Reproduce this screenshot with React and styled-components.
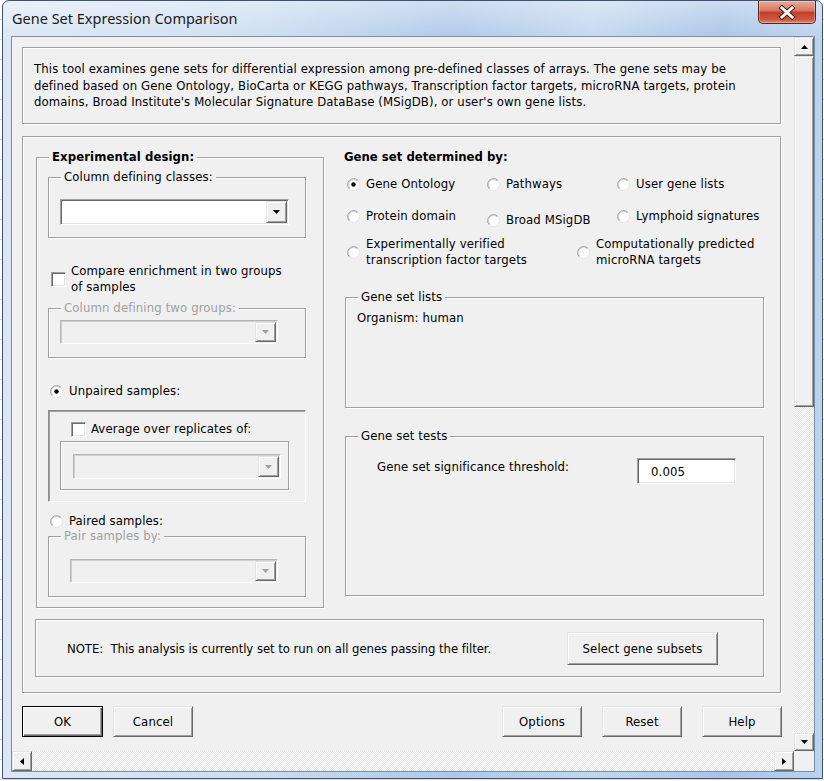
import React from 'react';
import styled, { createGlobalStyle, css } from 'styled-components';

const uiFont = `"DejaVu Sans Condensed", "DejaVu Sans", Tahoma, sans-serif`;

const GlobalStyle = createGlobalStyle`
  html, body {
    margin: 0;
    padding: 0;
  }
  body {
    font-family: ${uiFont};
    font-size: 13px;
    letter-spacing: 0.12px;
    color: #000;
    background: #fff;
  }
  * {
    box-sizing: border-box;
  }
`;

// classic win32 edges
const etched = css`
  border: 1px solid #a0a0a0;
  box-shadow: inset 1px 1px 0 #fff, 1px 1px 0 #fff;
`;

const sunken = css`
  border: 1px solid;
  border-color: #a0a0a0 #fff #fff #a0a0a0;
  box-shadow: inset 1px 1px 0 #696969, inset -1px -1px 0 #e3e3e3;
`;

const raised = css`
  border: 1px solid;
  border-color: #e3e3e3 #696969 #696969 #e3e3e3;
  box-shadow: inset 1px 1px 0 #fff, inset -1px -1px 0 #a0a0a0;
  background: #f0f0f0;
`;

const Screen = styled.div`
  width: 824px;
  height: 781px;
  overflow: hidden;
  padding-left: 2px;
  background: repeating-linear-gradient(to bottom, #ffffff 0 19px, #d5dbe4 19px 20px);
`;

const Window = styled.div`
  width: 821px;
  height: 779px;
  display: flex;
  flex-direction: column;
  border: 1px solid #3f5270;
  border-radius: 7px 7px 0 0;
  background:
    linear-gradient(to bottom, rgba(255, 255, 255, 0.4), rgba(255, 255, 255, 0) 40px),
    linear-gradient(to right, #dce7f4 0%, #cddef1 30%, #aec8e9 55%, #c2d7ef 72%, #a9c4e7 88%, #bcd2ee 100%);
`;

const TitleBar = styled.div`
  height: 35px;
  flex: none;
  display: flex;
  align-items: flex-start;
  padding-left: 9px;
`;

const Title = styled.div`
  font-family: "Noto Sans", "Open Sans", sans-serif;
  font-size: 14.5px;
  letter-spacing: 0;
  line-height: 20px;
  margin-top: 7px;
  color: #1b1b1b;
`;

const CloseButton = styled.div`
  margin-left: auto;
  margin-right: 6px;
  width: 58px;
  height: 23px;
  border: 1px solid #5a2219;
  border-top: none;
  border-radius: 0 0 5px 5px;
  background: linear-gradient(to bottom, #e8ac9f 0%, #d87a66 42%, #c2402a 52%, #cd5a40 85%, #e08a6c 100%);
  box-shadow: inset 0 0 0 1px rgba(255, 255, 255, 0.3);
  display: flex;
  align-items: center;
  justify-content: center;
`;

const Client = styled.div`
  flex: 1;
  min-height: 0;
  margin: 0 7px 6px 8px;
  border: 1px solid #7b8ca5;
  display: grid;
  grid-template-columns: 1fr 20px;
  grid-template-rows: 1fr 20px;
  background: #f0f0f0;
`;

const Viewport = styled.div`
  overflow: hidden;
  min-height: 0;
  padding: 10px 0 0 10px;
`;

const DescBox = styled.div`
  width: 759px;
  height: 77px;
  ${etched};
  padding: 13px 0 0 11px;
  line-height: 16.5px;
  white-space: nowrap;
`;

const MainFrame = styled.div`
  width: 759px;
  height: 557px;
  margin-top: 12px;
  ${etched};
  padding: 20px 0 0 13px;
`;

const TopRow = styled.div`
  display: flex;
  align-items: flex-start;
`;

const Group = styled.div`
  width: ${p => p.$w}px;
  height: ${p => p.$h}px;
  margin: ${p => p.$m || '0'};
  ${etched};
`;

const SunkenBox = styled.div`
  width: ${p => p.$w}px;
  height: ${p => p.$h}px;
  margin: ${p => p.$m || '0'};
  border: 1px solid;
  border-color: #8a8a8a #fff #fff #8a8a8a;
  box-shadow: inset 1px 1px 0 #a0a0a0;
`;

const Caption = styled.div`
  width: fit-content;
  margin: -9px 0 0 12px;
  padding: 0 3px;
  line-height: 16px;
  background: #f0f0f0;
  color: ${p => (p.$disabled ? '#a0a0a0' : '#000')};
  font-weight: ${p => (p.$bold ? 700 : 400)};
  letter-spacing: ${p => (p.$bold ? '0.1px' : 'inherit')};
`;

const Heading = styled.div`
  line-height: 16px;
  font-weight: 700;
  letter-spacing: 0;
`;

const ComboBox = styled.div`
  width: ${p => p.$w}px;
  height: ${p => p.$h}px;
  margin: ${p => p.$m || '0'};
  display: flex;
  justify-content: flex-end;
  padding: 1px;
  background: ${p => (p.$disabled ? '#f0f0f0' : '#fff')};
  ${sunken};
  ${p => p.$disabled && css`
    border-color: #b4b4b4 #fff #fff #b4b4b4;
    box-shadow: inset 1px 1px 0 #d0d0d0;
  `}
`;

const DropButton = styled.div`
  width: 21px;
  ${raised};
  display: flex;
  align-items: center;
  justify-content: center;
`;

const OptionRow = styled.div`
  display: flex;
  align-items: center;
  gap: ${p => p.$gap || 6}px;
  margin: ${p => p.$m || '0'};
  width: ${p => (p.$w ? `${p.$w}px` : 'auto')};
  line-height: 16px;
  white-space: nowrap;
  color: ${p => (p.$disabled ? '#a0a0a0' : '#000')};
`;

const CheckBox = styled.span`
  width: 15px;
  height: 15px;
  flex: none;
  background: #fff;
  border: 1px solid;
  border-color: #a0a0a0 #fff #fff #a0a0a0;
  box-shadow: inset 1px 1px 0 #696969, inset -1px -1px 0 #e3e3e3;
`;

const RadioMark = styled.svg`
  flex: none;
  display: block;
`;

const RadioGrid = styled.div`
  display: grid;
  grid-template-columns: 140px 130px 1fr;
  row-gap: 16px;
  margin: 11px 0 0 3px;
`;

const TwoLineRow = styled.div`
  display: flex;
  margin: 12px 0 0 3px;
`;

const RightColumn = styled.div`
  width: 420px;
  margin: -8px 0 0 20px;
`;

const PlainText = styled.div`
  line-height: 16px;
  margin: ${p => p.$m || '0'};
`;

const FieldRow = styled.div`
  display: flex;
  align-items: flex-start;
  margin-top: 14px;
  padding-left: 31px;
`;

const FieldLabel = styled.div`
  width: 260px;
  margin-top: 1px;
  line-height: 16px;
`;

const NumberInput = styled.input`
  width: 99px;
  height: 26px;
  padding: 0 0 0 13px;
  font: inherit;
  letter-spacing: inherit;
  color: #000;
  background: #fff;
  outline: none;
  ${sunken};
`;

const NoteBox = styled.div`
  width: 729px;
  height: 58px;
  margin: 11px 0 0 -1px;
  ${etched};
  display: flex;
  align-items: center;
  padding-left: 31px;
  letter-spacing: -0.05px;
  white-space: pre;
`;

const PushButton = styled.button`
  width: ${p => p.$w || 80}px;
  height: ${p => p.$h || 31}px;
  margin: 0;
  padding: 0;
  font: inherit;
  letter-spacing: 0.12px;
  color: #000;
  ${raised};
  ${p => p.$default && css`
    border-color: #000;
    box-shadow: inset 1px 1px 0 #fff, inset -1px -1px 0 #696969, inset -2px -2px 0 #a0a0a0;
  `}
`;

const NoteButton = styled(PushButton)`
  margin-left: auto;
  margin-right: 45px;
`;

const ButtonRow = styled.div`
  width: 760px;
  margin-top: 13px;
  display: flex;
  gap: 10px;
`;

const ButtonGroup = styled.div`
  display: flex;
  gap: 20px;
  margin-left: auto;
`;

const VScroll = styled.div`
  display: flex;
  flex-direction: column;
  min-height: 0;
`;

const HScroll = styled.div`
  display: flex;
`;

const ScrollButton = styled.div`
  flex: none;
  width: ${p => p.$w || 20}px;
  height: ${p => p.$h || 20}px;
  ${raised};
  display: flex;
  align-items: center;
  justify-content: center;
`;

const Thumb = styled.div`
  flex: none;
  height: ${p => p.$h}px;
  ${raised};
`;

const Track = styled.div`
  flex: 1;
  background: repeating-conic-gradient(#ffffff 0 25%, #e6e6e6 0 50%) 0 0 / 2px 2px;
`;

const Corner = styled.div`
  background: #f0f0f0;
`;

const Arrow = ({ dir = 'down', color = '#000' }) => {
  const vertical = dir === 'up' || dir === 'down';
  const points = {
    down: '0,0 7,0 3.5,4',
    up: '0,4 7,4 3.5,0',
    left: '4,0 4,7 0,3.5',
    right: '0,0 0,7 4,3.5',
  }[dir];
  return (
    <svg width={vertical ? 7 : 4} height={vertical ? 4 : 7} viewBox={vertical ? '0 0 7 4' : '0 0 4 7'}>
      <polygon points={points} fill={color} />
    </svg>
  );
};

const Radio = ({ checked }) => (
  <RadioMark width="13" height="13" viewBox="0 0 13 13">
    <circle cx="6.5" cy="6.5" r="6" fill="#fff" stroke="#e3e3e3" />
    <path d="M2.26 10.74 A6 6 0 0 1 10.74 2.26" fill="none" stroke="#a0a0a0" />
    <path d="M2.96 10.04 A5 5 0 0 1 10.04 2.96" fill="none" stroke="#c8c8c8" />
    {checked && <circle cx="6.5" cy="6.5" r="2.2" fill="#000" />}
  </RadioMark>
);

const Combo = ({ disabled, w, h, m }) => (
  <ComboBox $disabled={disabled} $w={w} $h={h} $m={m}>
    <DropButton>
      <Arrow dir="down" color={disabled ? '#a0a0a0' : '#000'} />
    </DropButton>
  </ComboBox>
);

const RadioOption = ({ checked, children, m, w }) => (
  <OptionRow $m={m} $w={w}>
    <Radio checked={checked} />
    <span>{children}</span>
  </OptionRow>
);

const CloseIcon = () => (
  <svg width="18" height="15" viewBox="0 0 18 15">
    <path d="M4 3 L14 12 M14 3 L4 12" stroke="#4a1d15" strokeWidth="5" strokeLinecap="square" />
    <path d="M4 3 L14 12 M14 3 L4 12" stroke="#fff" strokeWidth="3" strokeLinecap="square" />
  </svg>
);

const App = () => (
  <Screen>
    <GlobalStyle />
    <Window>
      <TitleBar>
        <Title>Gene Set Expression Comparison</Title>
        <CloseButton>
          <CloseIcon />
        </CloseButton>
      </TitleBar>
      <Client>
        <Viewport>
          <DescBox>
            This tool examines gene sets for differential expression among pre-defined classes of arrays. The gene sets may be
            <br />
            defined based on Gene Ontology, BioCarta or KEGG pathways, Transcription factor targets, microRNA targets, protein
            <br />
            domains, Broad Institute's Molecular Signature DataBase (MSigDB), or user's own gene lists.
          </DescBox>

          <MainFrame>
            <TopRow>
              <Group $w={288} $h={451}>
                <Caption $bold>Experimental design:</Caption>

                <Group $w={258} $h={61} $m="12px 0 0 11px">
                  <Caption>Column defining classes:</Caption>
                  <Combo w={229} h={26} m="14px 0 0 11px" />
                </Group>

                <OptionRow $m="25px 0 0 14px" $gap={5}>
                  <CheckBox />
                  <span>
                    Compare enrichment in two groups
                    <br />
                    of samples
                  </span>
                </OptionRow>

                <Group $w={258} $h={50} $m="13px 0 0 11px">
                  <Caption $disabled>Column defining two groups:</Caption>
                  <Combo disabled w={218} h={24} m="4px 0 0 11px" />
                </Group>

                <RadioOption checked m="25px 0 0 13px">Unpaired samples:</RadioOption>

                <SunkenBox $w={258} $h={92} $m="11px 0 0 11px">
                  <OptionRow $m="10px 0 0 22px" $gap={5}>
                    <CheckBox />
                    <span>Average over replicates of:</span>
                  </OptionRow>
                  <Group $w={229} $h={49} $m="4px 0 0 11px">
                    <Combo disabled w={208} h={25} m="12px 0 0 12px" />
                  </Group>
                </SunkenBox>

                <RadioOption m="11px 0 0 13px">Paired samples:</RadioOption>

                <Group $w={258} $h={61} $m="7px 0 0 11px">
                  <Caption $disabled>Pair samples by:</Caption>
                  <Combo disabled w={208} h={24} m="15px 0 0 21px" />
                </Group>
              </Group>

              <RightColumn>
                <Heading>Gene set determined by:</Heading>
                <RadioGrid>
                  <RadioOption checked>Gene Ontology</RadioOption>
                  <RadioOption>Pathways</RadioOption>
                  <RadioOption>User gene lists</RadioOption>
                  <RadioOption>Protein domain</RadioOption>
                  <RadioOption m="4px 0 -4px 0">Broad MSigDB</RadioOption>
                  <RadioOption>Lymphoid signatures</RadioOption>
                </RadioGrid>
                <TwoLineRow>
                  <RadioOption w={230}>
                    Experimentally verified
                    <br />
                    transcription factor targets
                  </RadioOption>
                  <RadioOption>
                    Computationally predicted
                    <br />
                    microRNA targets
                  </RadioOption>
                </TwoLineRow>

                <Group $w={419} $h={111} $m="29px 0 0 1px">
                  <Caption>Gene set lists</Caption>
                  <PlainText $m="5px 0 0 11px">Organism: human</PlainText>
                </Group>

                <Group $w={419} $h={160} $m="28px 0 0 1px">
                  <Caption>Gene set tests</Caption>
                  <FieldRow>
                    <FieldLabel>Gene set significance threshold:</FieldLabel>
                    <NumberInput defaultValue="0.005" />
                  </FieldRow>
                </Group>
              </RightColumn>
            </TopRow>

            <NoteBox>
              <span>NOTE:  This analysis is currently set to run on all genes passing the filter.</span>
              <NoteButton $w={151} $h={33}>Select gene subsets</NoteButton>
            </NoteBox>
          </MainFrame>

          <ButtonRow>
            <PushButton $default $w={81}>OK</PushButton>
            <PushButton>Cancel</PushButton>
            <ButtonGroup>
              <PushButton>Options</PushButton>
              <PushButton>Reset</PushButton>
              <PushButton>Help</PushButton>
            </ButtonGroup>
          </ButtonRow>
        </Viewport>

        <VScroll>
          <ScrollButton $h={19}>
            <Arrow dir="up" />
          </ScrollButton>
          <Thumb $h={351} />
          <Track />
          <ScrollButton $h={18}>
            <Arrow dir="down" />
          </ScrollButton>
        </VScroll>

        <HScroll>
          <ScrollButton>
            <Arrow dir="left" />
          </ScrollButton>
          <Track />
          <ScrollButton>
            <Arrow dir="right" />
          </ScrollButton>
        </HScroll>
        <Corner />
      </Client>
    </Window>
  </Screen>
);

export default App;
